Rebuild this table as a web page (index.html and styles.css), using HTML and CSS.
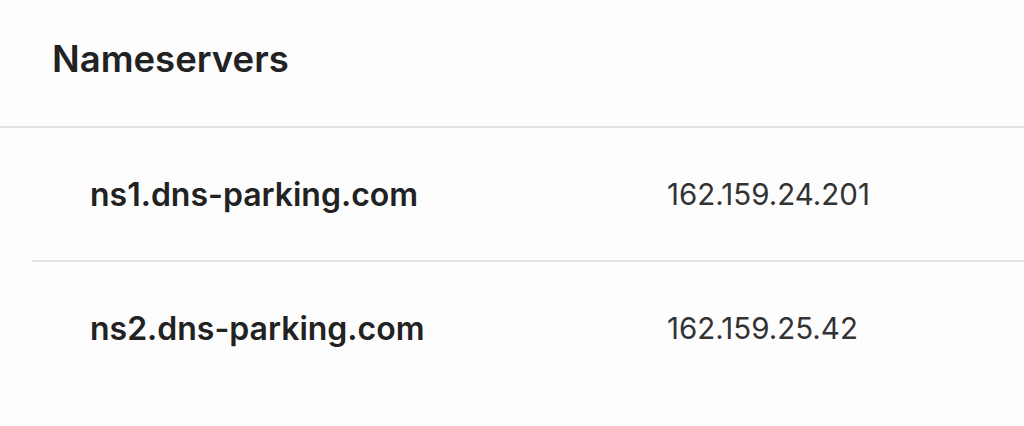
FILE: index.html
```html
<!DOCTYPE html>
<html>
<head>
<meta charset="utf-8">
<link rel="stylesheet" href="styles.css">
</head>
<body>
<section class="card">
  <header class="card-header">
    <h2 class="title">Nameservers</h2>
  </header>
  <ul class="ns-list">
    <li class="ns-row">
      <span class="ns-name">ns1.dns-parking.com</span>
      <span class="ns-ip">162.159.24.201</span>
    </li>
    <li class="ns-row">
      <span class="ns-name">ns2.dns-parking.com</span>
      <span class="ns-ip">162.159.25.42</span>
    </li>
  </ul>
</section>
</body>
</html>
```
FILE: styles.css
```css
html, body {
  margin: 0;
  padding: 0;
  background: #fdfdfd;
}
body {
  width: 1024px;
  height: 426px;
  overflow: hidden;
  font-family: "Inter", "Noto Sans", sans-serif;
  color: #222;
}
.card-header {
  height: 128px;
  box-sizing: border-box;
  display: flex;
  align-items: center;
  padding: 0 0 6px 52px;
  border-bottom: 2px solid #e2e2e2;
}
.title {
  margin: 0;
  font-size: 36.5px;
  font-weight: 600;
  color: #222;
  line-height: 1.2;
}
.ns-list {
  list-style: none;
  margin: 0 0 0 32px;
  padding: 0;
}
.ns-row {
  height: 132px;
  display: flex;
  align-items: center;
  padding-left: 58px;
}
.ns-row + .ns-row {
  border-top: 2px solid #e2e2e2;
}
.ns-name {
  width: 577px;
  font-size: 32px;
  font-weight: 600;
  color: #222;
}
.ns-ip {
  font-size: 29.5px;
  font-weight: 400;
  color: #333;
}
```
